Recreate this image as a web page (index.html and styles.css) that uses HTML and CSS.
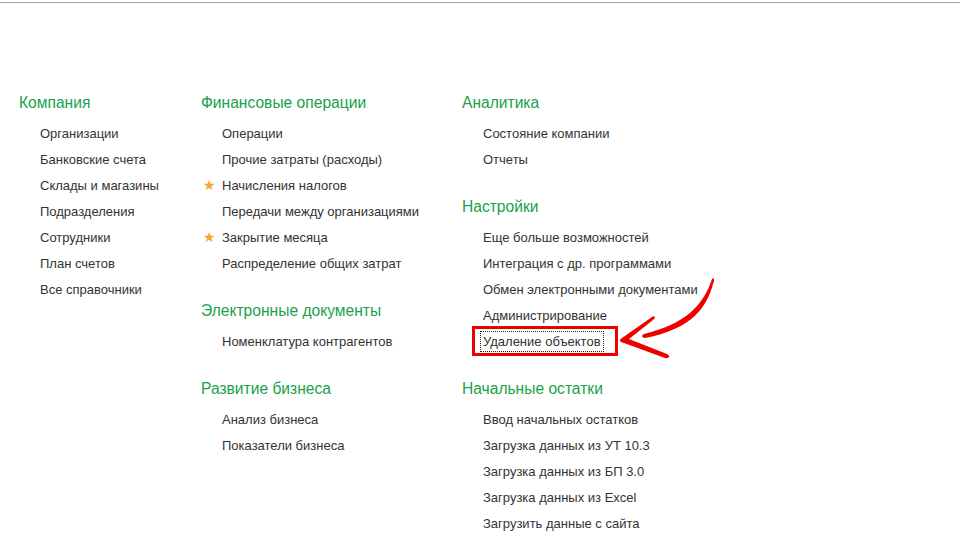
FILE: index.html
```html
<!DOCTYPE html>
<html lang="ru">
	<head>
		<meta charset="UTF-8" />
		<meta name="viewport" content="width=device-width, initial-scale=1.0" />
		<title>Администрирование</title>

		<link rel="stylesheet" href="styles.css">
	</head>

	<body>
		<div class="topline"></div>

		<div class="panel">
			<div class="column col-1">
				<div class="section">
					<h2>Компания</h2>
					<ul>
						<li><span>Организации</span></li>
						<li><span>Банковские счета</span></li>
						<li><span>Склады и магазины</span></li>
						<li><span>Подразделения</span></li>
						<li><span>Сотрудники</span></li>
						<li><span>План счетов</span></li>
						<li><span>Все справочники</span></li>
					</ul>
				</div>
			</div>

			<div class="column col-2">
				<div class="section">
					<h2>Финансовые операции</h2>
					<ul>
						<li><span>Операции</span></li>
						<li><span>Прочие затраты (расходы)</span></li>
						<li class="fav"><span>Начисления налогов</span></li>
						<li><span>Передачи между организациями</span></li>
						<li class="fav"><span>Закрытие месяца</span></li>
						<li><span>Распределение общих затрат</span></li>
					</ul>
				</div>
				<div class="section">
					<h2>Электронные документы</h2>
					<ul>
						<li><span>Номенклатура контрагентов</span></li>
					</ul>
				</div>
				<div class="section">
					<h2>Развитие бизнеса</h2>
					<ul>
						<li><span>Анализ бизнеса</span></li>
						<li><span>Показатели бизнеса</span></li>
					</ul>
				</div>
			</div>

			<div class="column col-3">
				<div class="section">
					<h2>Аналитика</h2>
					<ul>
						<li><span>Состояние компании</span></li>
						<li><span>Отчеты</span></li>
					</ul>
				</div>
				<div class="section">
					<h2>Настройки</h2>
					<ul>
						<li><span>Еще больше возможностей</span></li>
						<li><span>Интеграция с др. программами</span></li>
						<li><span>Обмен электронными документами</span></li>
						<li><span>Администрирование</span></li>
						<li class="marked"><span class="focused">Удаление объектов</span></li>
					</ul>
				</div>
				<div class="section">
					<h2>Начальные остатки</h2>
					<ul>
						<li><span>Ввод начальных остатков</span></li>
						<li><span>Загрузка данных из УТ 10.3</span></li>
						<li><span>Загрузка данных из БП 3.0</span></li>
						<li><span>Загрузка данных из Excel</span></li>
						<li><span>Загрузить данные с сайта</span></li>
					</ul>
				</div>
			</div>

			<svg class="arrow" width="105" height="85" viewBox="0 0 105 85">
				<!-- curved shaft -->
				<path d="M97 3 C99 1 100 4 98 8 C92 30 78 53 30 62 C27 62 26 59 29 58 C70 48 88 30 97 3 Z" fill="#ee0000" />
				<!-- arrow head -->
				<path d="M7 62 L37 41 C40 39 41 42 38 44 L14 63 L52 78 C56 80 54 83 50 82 L9 67 C4 66 4 64 7 62 Z" fill="#ee0000" />
			</svg>
		</div>
	</body>
</html>
```

FILE: styles.css
```css
* {
	margin: 0;
	padding: 0;
	box-sizing: border-box;
}

body {
	background: #fff;
	font-family: "Liberation Sans", Arial, sans-serif;
	color: #333;
}

.topline {
	height: 3px;
	border-bottom: 1px solid #a3a3a3;
}

.panel {
	position: relative;
	display: flex;
	padding: 90px 0 0 19px;
}

.col-1 {
	width: 182px;
}

.col-2 {
	width: 261px;
}

.section + .section {
	margin-top: 25px;
}

h2 {
	font-size: 15.6px;
	font-weight: normal;
	line-height: 20px;
	color: #1a9f4b;
	margin-bottom: 7px;
}

ul {
	list-style: none;
}

li {
	position: relative;
	padding-left: 21px;
	font-size: 13px;
	line-height: 26px;
	white-space: nowrap;
}

li span {
	display: inline-block;
	line-height: 15px;
	vertical-align: middle;
}

li.fav::before {
	content: "\2605";
	position: absolute;
	left: 2px;
	top: 0;
	font-family: "DejaVu Sans", sans-serif;
	font-size: 14px;
	color: #f5a630;
}

.focused {
	position: relative;
	outline: 1px dotted #222;
	outline-offset: 2px;
}

.focused::after {
	content: "";
	position: absolute;
	left: -11px;
	right: -17px;
	top: -8px;
	bottom: -7px;
	border: 3px solid #ee0000;
}

.arrow {
	position: absolute;
	left: 615px;
	top: 273px;
}
```
